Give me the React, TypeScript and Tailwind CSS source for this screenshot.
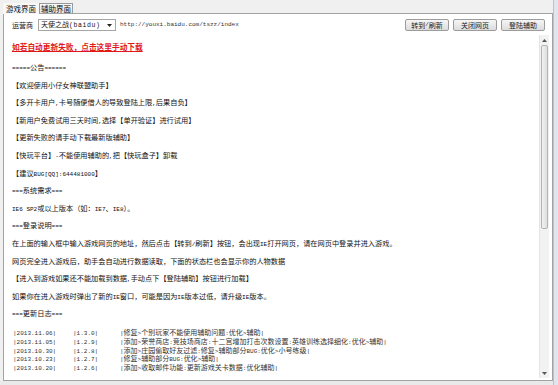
import React from 'react';

const ASCII = /([\x20-\x7e]+)/;

// SimSun-style rendering: half-width ASCII runs in a narrow mono face
const Txt: React.FC<{ s: string }> = ({ s }) => (
  <>
    {s.split(ASCII).map((p, i) =>
      i % 2 === 1 ? (
        <span key={i} className="font-['Liberation_Mono'] text-[6px]">
          {p}
        </span>
      ) : (
        p
      )
    )}
  </>
);

const notice = [
  '=====公告======',
  '【欢迎使用小仔女神联盟助手】',
  '【多开卡用户,卡号随便借人的导致登陆上限,后果自负】',
  '【新用户免费试用三天时间,选择【单开验证】进行试用】',
  '【更新失败的请手动下载最新版辅助】',
  '【快玩平台】-不能使用辅助的,把【快玩盒子】卸载',
  '【建议BUG[QQ]:644481000】',
  '===系统需求===',
  'IE6 SP2或以上版本（如：IE7、IE8）。',
  '===登录说明===',
  '在上面的输入框中输入游戏网页的地址，然后点击【转到/刷新】按钮，会出现IE打开网页，请在网页中登录并进入游戏。',
  '网页完全进入游戏后，助手会自动进行数据读取，下面的状态栏也会显示你的人物数据',
  '【进入到游戏如果还不能加载到数据,手动点下【登陆辅助】按钮进行加载】',
  '如果你在进入游戏时弹出了新的IE窗口，可能是因为IE版本过低，请升级IE版本。',
  '===更新日志===',
];

const changelog = [
  ['|2013.11.06|', '|1.3.0|', '|修复>个别玩家不能使用辅助问题:优化>辅助|'],
  ['|2013.11.05|', '|1.2.9|', '|添加>荣誉商店:竞技场商店:十二宫增加打击次数设置:英雄训练选择细化:优化>辅助|'],
  ['|2013.10.30|', '|1.2.8|', '|添加>庄园偷取好友过滤:修复>辅助部分BUG:优化>小号练级|'],
  ['|2013.10.23|', '|1.2.7|', '|修复>辅助部分BUG:优化>辅助|'],
  ['|2013.10.20|', '|1.2.6|', '|添加>收取邮件功能:更新游戏关卡数据:优化辅助|'],
];

const Btn: React.FC<{ label: string }> = ({ label }) => (
  <button className="w-[44px] h-[12px] flex items-center justify-center rounded-[2px] border border-[#9c9c9c] bg-gradient-to-b from-[#f6f6f6] to-[#dcdcdc] text-[7px] leading-none text-[#222]">
    <Txt s={label} />
  </button>
);

export default function App() {
  return (
    <div className="w-[558px] h-[385px] overflow-hidden flex bg-[#f0f0f0] text-[#111] font-['Noto_Sans_CJK_SC',sans-serif]">
      <div className="flex-1 flex flex-col">
        {/* Tabs */}
        <div className="h-[13px] flex items-end pl-[3px] text-[7.5px] leading-none">
          <div className="w-[36px] h-[11px] flex items-center justify-center bg-[#f7f7f7] -mb-px relative">
            游戏界面
          </div>
          <div className="w-[34px] h-[10px] flex items-center justify-center border border-b-0 border-[#9a9a9a] bg-gradient-to-b from-[#f8f8f8] to-[#e4e4e4]">
            辅助界面
          </div>
        </div>

        {/* Tab panel */}
        <div className="ml-[3px] h-[368px] border border-[#a3a3a3] bg-white flex flex-col">
          {/* Toolbar */}
          <div className="h-[17px] pt-[5px] pl-[8px] pr-[7px] flex items-start gap-[3px]">
            <div className="h-[12px] w-[23px] flex items-center text-[7px] leading-none">运营商</div>
            <div className="w-[78px] h-[12px] flex items-center justify-between border border-[#a5a5a5] pl-[2px] pr-[3px] leading-none">
              <span className="text-[7px]">
                天使之战<span className="font-['Liberation_Mono'] text-[6.5px] tracking-[0.6px]">(baidu)</span>
              </span>
              <svg width="5" height="3" viewBox="0 0 5 3">
                <path d="M0 0h5L2.5 3z" fill="#222" />
              </svg>
            </div>
            <div className="flex-1 h-[12px] flex items-center pl-[1px] font-['Liberation_Mono'] text-[6px] leading-none text-[#333]">
              http://youxi.baidu.com/tszz/index
            </div>
            <div className="flex gap-[4px]">
              <Btn label="转到/刷新" />
              <Btn label="关闭网页" />
              <Btn label="登陆辅助" />
            </div>
          </div>

          {/* Rich text area + scrollbar */}
          <div className="mt-[4px] h-[343px] flex pr-[3px]">
            <div className="flex-1 pl-[8px] pt-[3px] text-[7.2px] overflow-hidden">
              <div className="h-[17.6px] leading-[17.6px] text-[7.7px] font-bold text-[#e01818] underline">
                如若自动更新失败，点击这里手动下载
              </div>
              <div className="mt-[3.4px]">
                {notice.map((line, i) => (
                  <div key={i} className="h-[17.6px] leading-[17.6px] whitespace-nowrap">
                    <Txt s={line} />
                  </div>
                ))}
              </div>
              <div className="mt-[5.5px] pl-[1px] text-[7px] text-[#333]">
                {changelog.map(([d, v, note], i) => (
                  <div key={i} className="grid grid-cols-[60px_47px_1fr] h-[8.6px] leading-[8.6px] whitespace-nowrap">
                    <span><Txt s={d} /></span>
                    <span><Txt s={v} /></span>
                    <span><Txt s={note} /></span>
                  </div>
                ))}
              </div>
            </div>

            {/* Scrollbar */}
            <div className="w-[10px] flex flex-col bg-[#f2f2f2] border-l border-[#e4e4e4]">
              <div className="h-[10px] flex items-center justify-center">
                <svg width="5" height="3" viewBox="0 0 5 3">
                  <path d="M0 3h5L2.5 0z" fill="#555" />
                </svg>
              </div>
              <div className="h-[184px] mx-[1px] rounded-[2px] border border-[#b4b4b4] bg-gradient-to-r from-[#f2f2f2] to-[#dedede]" />
              <div className="flex-1" />
              <div className="h-[10px] flex items-center justify-center">
                <svg width="5" height="3" viewBox="0 0 5 3">
                  <path d="M0 0h5L2.5 3z" fill="#555" />
                </svg>
              </div>
            </div>
          </div>
        </div>

        {/* Bottom strip */}
        <div className="flex-1 bg-[#e9e9e9]" />
      </div>

      {/* Window edge */}
      <div className="w-[5px] border-l border-[#b9c3cf] bg-[#dfe6ee]" />
    </div>
  );
}
